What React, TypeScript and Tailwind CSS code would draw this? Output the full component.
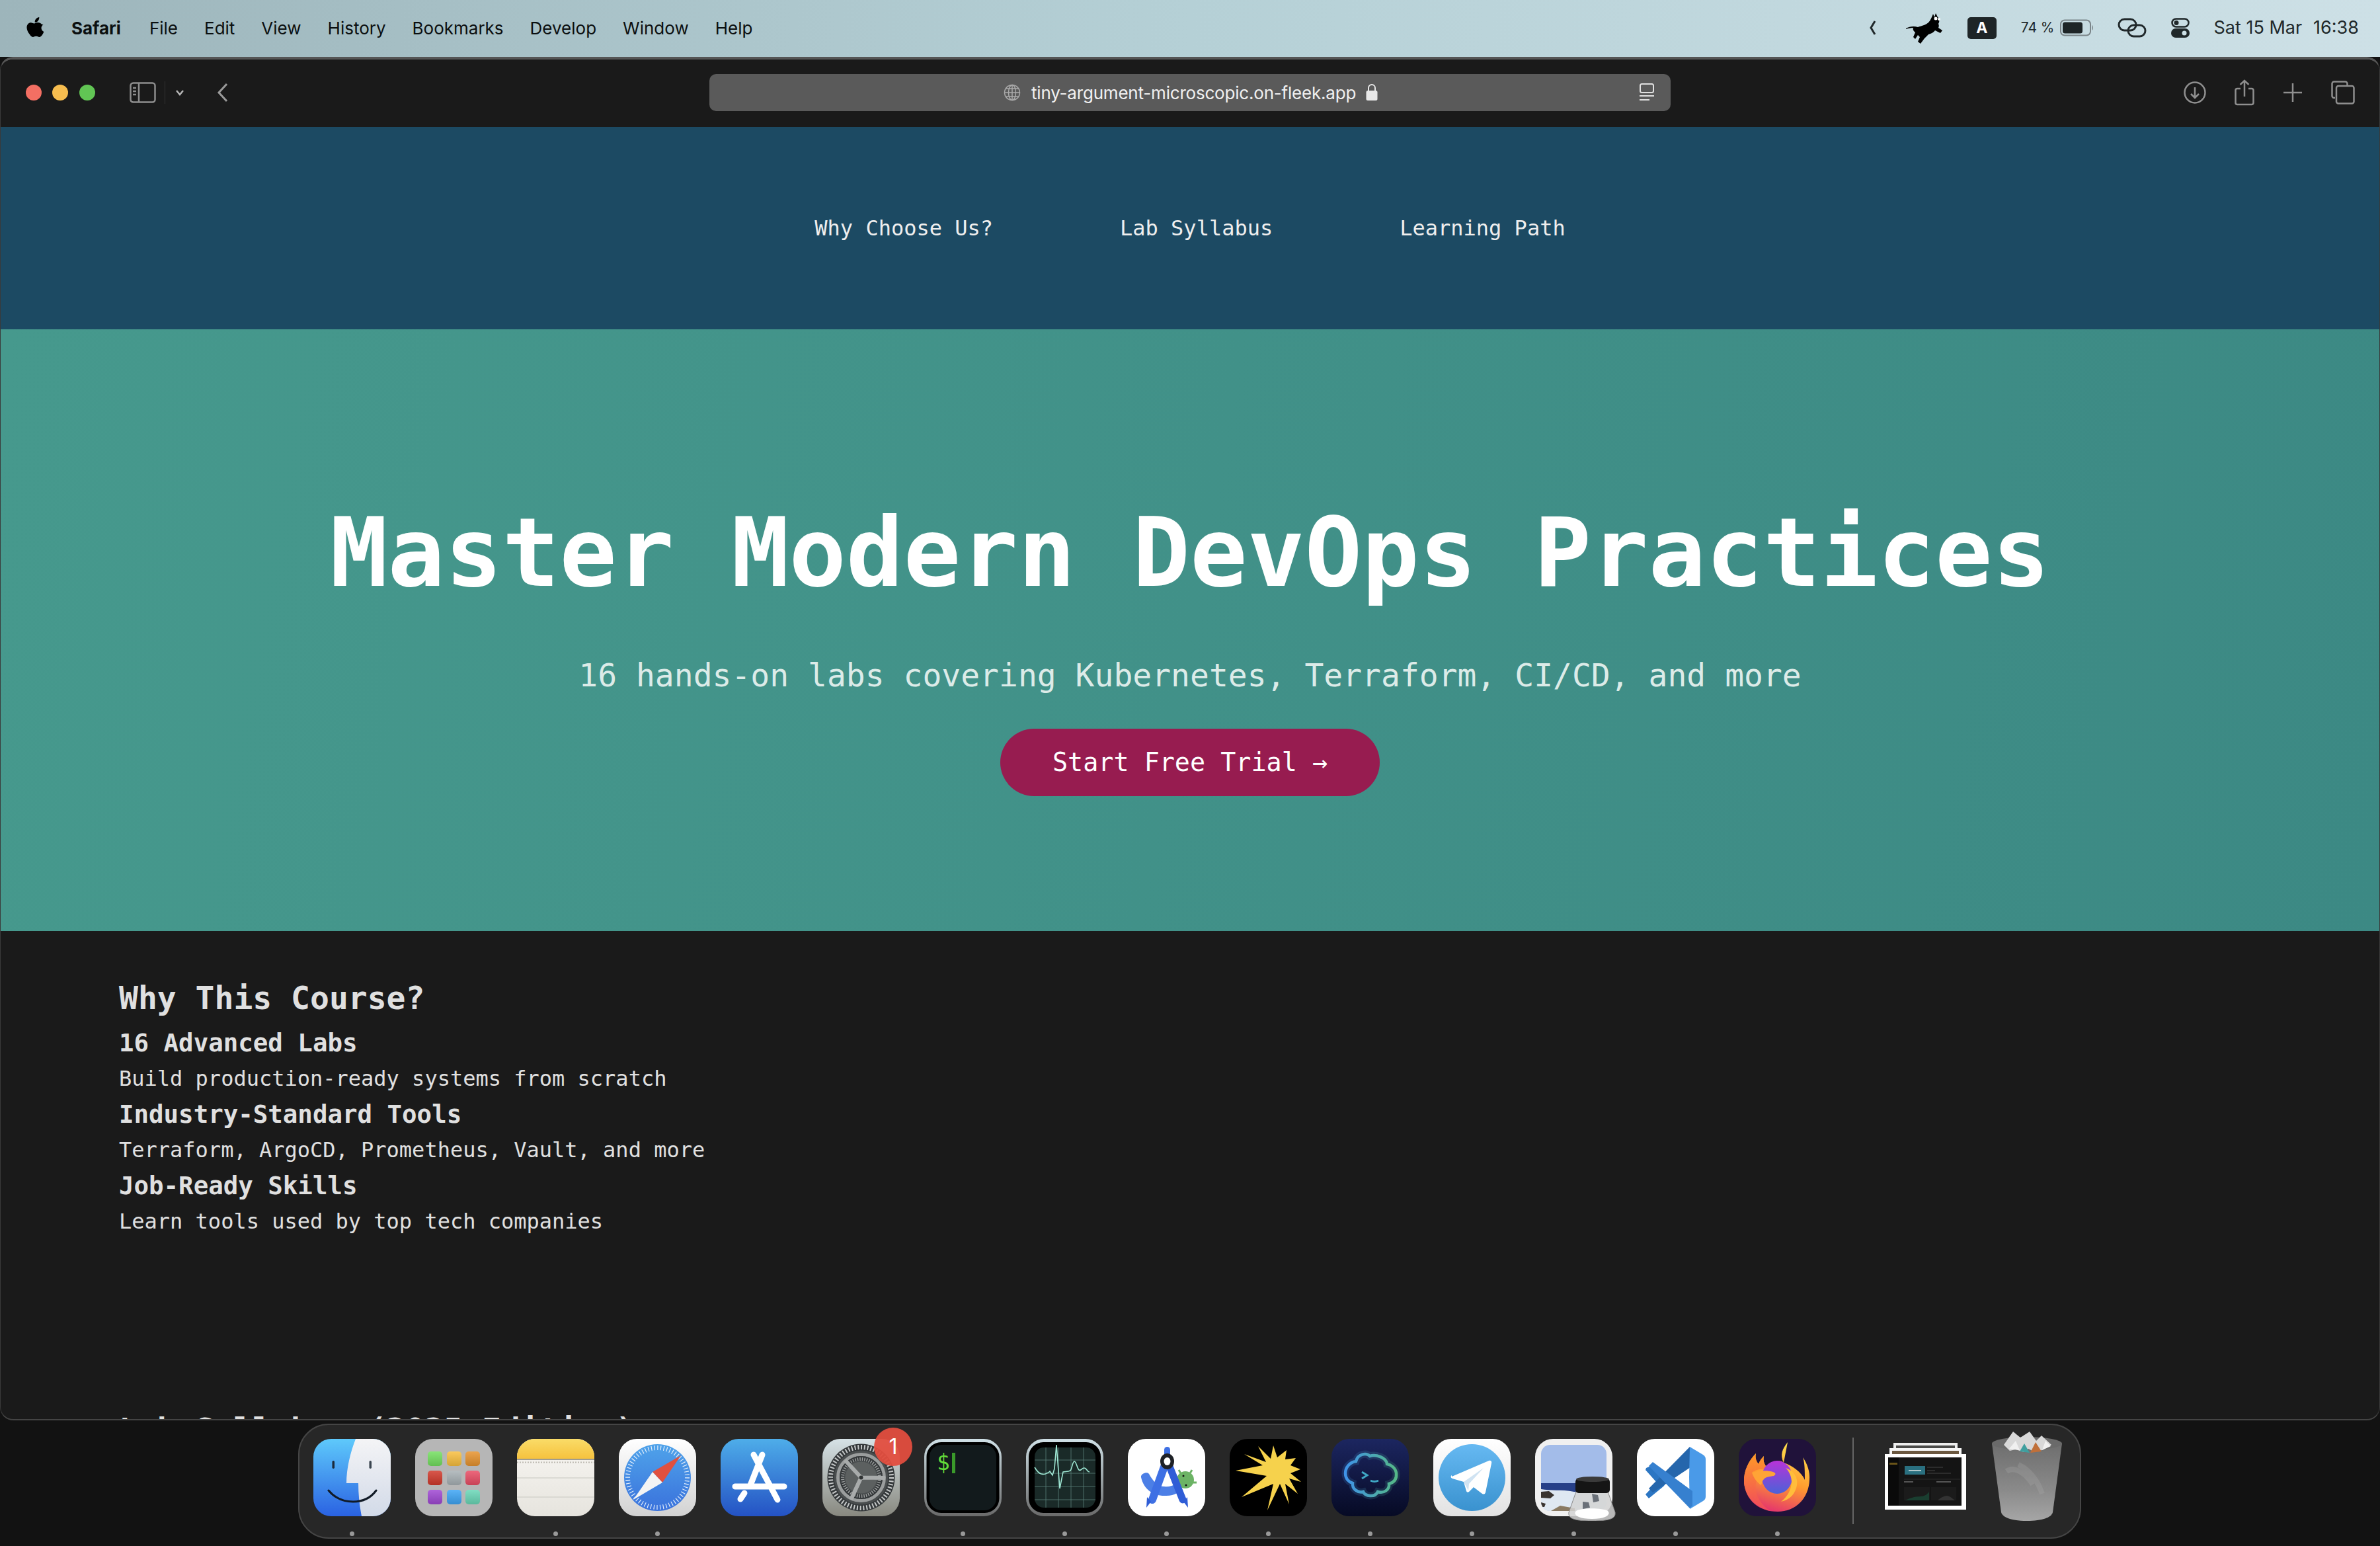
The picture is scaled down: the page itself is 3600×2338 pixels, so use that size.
const mono = "font-['DejaVu_Sans_Mono',monospace]";

const menus = ['File', 'Edit', 'View', 'History', 'Bookmarks', 'Develop', 'Window', 'Help'];

function MenuBar() {
  return (
    <div className="flex h-[86px] shrink-0 items-center justify-between bg-[linear-gradient(90deg,#9db5bb,#b5d0d6_50%,#cde0e6)] pb-[2px] pl-[40px] pr-[32px] font-['Inter',sans-serif] text-[26px] text-[#0b0f10]">
      <div className="flex items-center">
        <svg viewBox="0 0 26 32" className="mr-[41px] h-[32px] w-[27px] fill-black">
          <path d="M18.8 0c.2 2-.6 4-1.7 5.400-1.200 1.400-3 2.500-4.900 2.300-.2-1.900.7-3.900 1.800-5.200C15.200 1.100 17.200.1 18.800 0zM25 11.200c-1.800 1.100-3 3-3 5.100 0 2.500 1.500 4.700 3.800 5.600-.5 1.500-1.200 3-2.100 4.300-1.300 1.900-2.700 3.800-4.700 3.800-2 0-2.600-1.200-4.900-1.200-2.300 0-3 1.200-4.900 1.200-2 0-3.500-2-4.800-3.900C1.600 22.800 0 18.600 0 15.600c0-4.800 3.100-7.400 6.200-7.400 2 0 3.700 1.300 5 1.300 1.200 0 3.100-1.400 5.400-1.400 2.500 0 4.800.9 6.400 3z" />
        </svg>
        <span className="mr-[43px] font-bold">Safari</span>
        <div className="flex gap-[40px]">
          {menus.map((m) => (
            <span key={m}>{m}</span>
          ))}
        </div>
      </div>
      <div className="flex items-center text-[#20282a]">
        <svg viewBox="0 0 14 26" className="h-[26px] w-[14px] fill-none stroke-[#20282a] stroke-[3]">
          <path d="M10 3 4 13l6 10" />
        </svg>
        <svg viewBox="0 0 56 56" className="ml-[43px] h-[56px] w-[56px] fill-black">
          <path d="M0 29c5-3 12-4 18-2 5-2 12-3 16-7 3-3 5-8 7-13l2 5 2-6 3 6c3 2 3 7 1 10 1 2 1 4 0 6l6 4-3 4-8-4c-2 3-6 5-10 6l-6 6-6 8-4-3 3-7-3-3-4 6-3-3 3-7c-3-2-4-5-3-7-4 0-8 1-11 2z" />
          <circle cx="45" cy="14" r="2.500" fill="#fff" />
          <circle cx="50" cy="15" r="2" fill="#fff" />
        </svg>
        <div className="ml-[37px] flex h-[33px] w-[44px] items-center justify-center rounded-[5px] bg-[#1e2527] text-[23px] font-bold text-white">
          A
        </div>
        <span className="ml-[37px] text-[21px]">74 %</span>
        <svg viewBox="0 0 52 26" className="ml-[9px] h-[26px] w-[52px]">
          <rect x="1" y="1.500" width="45" height="23" rx="6" fill="none" stroke="#7b8589" strokeWidth="2" />
          <rect x="4" y="4.500" width="30" height="17" rx="3.500" fill="#1e2527" />
          <path d="M48.500 9c2 1 2 7 0 8z" fill="#7b8589" />
        </svg>
        <svg viewBox="0 0 44 30" className="ml-[35px] h-[30px] w-[44px] fill-none stroke-[#20282a] stroke-[3]">
          <rect x="2" y="2" width="26" height="17" rx="8.500" />
          <rect x="16" y="11" width="26" height="17" rx="8.500" />
        </svg>
        <svg viewBox="0 0 28 30" className="ml-[37px] h-[30px] w-[28px]">
          <rect x="1.500" y="1.500" width="25" height="12" rx="6" fill="none" stroke="#20282a" strokeWidth="2.500" />
          <circle cx="8" cy="7.500" r="3.500" fill="#20282a" />
          <rect x="0" y="16" width="28" height="14" rx="7" fill="#20282a" />
          <circle cx="20" cy="23" r="3.500" fill="#cde0e6" />
        </svg>
        <span className="ml-[36px] text-[27px]">Sat 15 Mar</span>
        <span className="ml-[17px] text-[27px]">16:38</span>
      </div>
    </div>
  );
}

function Toolbar() {
  return (
    <div className="flex h-[102px] shrink-0 items-center bg-[#1a1a1a] pb-[2px]">
      <div className="flex w-[1072px] items-center pl-[38px]">
        <span className="h-[24px] w-[24px] rounded-full bg-[#f36f63]" />
        <span className="ml-[16px] h-[24px] w-[24px] rounded-full bg-[#f6bd4f]" />
        <span className="ml-[17px] h-[24px] w-[24px] rounded-full bg-[#61c554]" />
        <svg viewBox="0 0 40 32" className="ml-[52px] h-[32px] w-[40px] fill-none stroke-[#8d8d8d] stroke-[2.500]">
          <rect x="1.500" y="1.500" width="37" height="29" rx="4" />
          <path d="M14 2v28M5 9h5M5 14h5M5 19h5" />
        </svg>
        <div className="ml-[13px] h-[34px] w-[1px] bg-[#333]" />
        <svg viewBox="0 0 14 10" className="ml-[15px] h-[10px] w-[14px] fill-none stroke-[#b5b5b5] stroke-[2.500]">
          <path d="M2 2l5 6 5-6" />
        </svg>
        <svg viewBox="0 0 18 30" className="ml-[49px] h-[30px] w-[18px] fill-none stroke-[#9a9a9a] stroke-[3]">
          <path d="M15 2 3 15l12 13" />
        </svg>
      </div>
      <div className="flex h-[56px] w-[1454px] items-center rounded-[10px] bg-[#5a5a5a] pl-[445px] pr-[24px] font-['Inter',sans-serif] text-[26px] text-[#f0f0f0]">
        <svg viewBox="0 0 26 26" className="h-[26px] w-[26px] fill-none stroke-[#aaa] stroke-[1.500]">
          <circle cx="13" cy="13" r="11.500" />
          <ellipse cx="13" cy="13" rx="5.500" ry="11.500" />
          <path d="M13 1.500v23M1.500 13h23M3.500 7h19M3.500 19h19" />
        </svg>
        <span className="ml-[16px] tracking-[-0.2px]">tiny-argument-microscopic.on-fleek.app</span>
        <svg viewBox="0 0 20 28" className="ml-[14px] h-[28px] w-[20px]">
          <path d="M5 12V7a5 5 0 0 1 10 0v5" fill="none" stroke="#e8e8e8" strokeWidth="2" />
          <rect x="1.500" y="11" width="17" height="15" rx="2.500" fill="#e8e8e8" />
        </svg>
        <svg viewBox="0 0 24 28" className="ml-auto h-[28px] w-[24px] fill-none stroke-[#e0e0e0] stroke-[2]">
          <rect x="2" y="1" width="20" height="13" rx="2.500" />
          <path d="M1 19h22M1 25h15" />
        </svg>
      </div>
      <div className="flex flex-1 items-center pl-[776px]">
        <svg viewBox="0 0 34 34" className="h-[34px] w-[34px] fill-none stroke-[#8f8f8f] stroke-[2.500]">
          <circle cx="17" cy="17" r="15.500" />
          <path d="M17 9v16M11 19l6 6 6-6" />
        </svg>
        <svg viewBox="0 0 30 40" className="ml-[43px] h-[40px] w-[30px] fill-none stroke-[#8f8f8f] stroke-[2.500]">
          <path d="M9 14H4a2.500 2.500 0 0 0-2.500 2.500v19A2.500 2.500 0 0 0 4 38h22a2.500 2.500 0 0 0 2.500-2.500v-19A2.500 2.500 0 0 0 26 14h-5M15 26V2M8.500 8 15 2l6.500 6" />
        </svg>
        <svg viewBox="0 0 28 28" className="ml-[44px] h-[28px] w-[28px] fill-none stroke-[#8f8f8f] stroke-[2.500]">
          <path d="M14 0v28M0 14h28" />
        </svg>
        <svg viewBox="0 0 36 36" className="ml-[44px] h-[36px] w-[36px] fill-none stroke-[#8f8f8f] stroke-[2.500]">
          <path d="M6 26H4.500a3 3 0 0 1-3-3V4.500a3 3 0 0 1 3-3h17a3 3 0 0 1 3 3V7" />
          <rect x="8" y="8" width="26.500" height="26.500" rx="3" />
        </svg>
      </div>
    </div>
  );
}

function Page() {
  return (
    <div className={`${mono} flex-1 overflow-hidden`}>
      <nav className="flex h-[306px] items-center justify-center gap-[192px] bg-[#1c4a63] text-[32px] text-[#eeeeee]">
        <span>Why Choose Us?</span>
        <span>Lab Syllabus</span>
        <span>Learning Path</span>
      </nav>
      <header className="flex h-[910px] flex-col items-center bg-[linear-gradient(100deg,#46998d,#3c8984)] pt-[223px] text-white">
        <h1 className="text-[144px] font-bold leading-[230px]">Master Modern DevOps Practices</h1>
        <p className="mt-[32px] text-[48px] leading-[77px] text-[#dcebe8]">
          16 hands-on labs covering Kubernetes, Terraform, CI/CD, and more
        </p>
        <button className="mt-[42px] flex h-[102px] w-[574px] items-center justify-center rounded-full bg-[#971c50] text-[38.400px] text-white">
          Start Free Trial →
        </button>
      </header>
      <section className="px-[179px] pt-[62px] text-[#e0e0e0]">
        <h2 className="text-[48px] font-bold leading-[78px]">Why This Course?</h2>
        <h3 className="text-[37.440px] font-bold leading-[58px]">16 Advanced Labs</h3>
        <p className="text-[32px] leading-[50px]">Build production-ready systems from scratch</p>
        <h3 className="text-[37.440px] font-bold leading-[58px]">Industry-Standard Tools</h3>
        <p className="text-[32px] leading-[50px]">Terraform, ArgoCD, Prometheus, Vault, and more</p>
        <h3 className="text-[37.440px] font-bold leading-[58px]">Job-Ready Skills</h3>
        <p className="text-[32px] leading-[50px]">Learn tools used by top tech companies</p>
        <h2 className="mt-[252px] text-[48px] font-bold leading-[76px]">Lab Syllabus (2025 Edition)</h2>
      </section>
    </div>
  );
}

function Squircle({ id, children, fill }: { id: string; children?: React.ReactNode; fill: string }) {
  return (
    <svg viewBox="0 0 117 117" className="h-[117px] w-[117px] overflow-visible">
      <defs>
        <clipPath id={id}>
          <rect width="117" height="117" rx="27" />
        </clipPath>
      </defs>
      <g clipPath={`url(#${id})`}>
        <rect width="117" height="117" fill={fill} />
        {children}
      </g>
    </svg>
  );
}

function Finder() {
  return (
    <Squircle id="finder" fill="url(#finderBlue)">
      <defs>
        <linearGradient id="finderBlue" x1="0" y1="0" x2="0" y2="1">
          <stop offset="0" stopColor="#5ec9fb" />
          <stop offset="1" stopColor="#2a62e2" />
        </linearGradient>
        <linearGradient id="finderWhite" x1="0" y1="0" x2="0" y2="1">
          <stop offset="0" stopColor="#f4f4f6" />
          <stop offset="1" stopColor="#d2dae8" />
        </linearGradient>
      </defs>
      <path d="M64 0C56 20 50 45 50 67h18c0 18 2 35 5 50h44V0z" fill="url(#finderWhite)" />
      <rect x="28.500" y="33" width="3.500" height="12" rx="1.700" fill="#1c2a3a" />
      <rect x="84.500" y="33" width="3.500" height="12" rx="1.700" fill="#3a4550" />
      <path d="M23 78c10 12 22 17 37 17s27-6 35-17" fill="none" stroke="#111a26" strokeWidth="3" strokeLinecap="round" />
    </Squircle>
  );
}

function Launchpad() {
  const tiles = [
    ['#74e060', 19, 19],
    ['#fac040', 48, 19],
    ['#e8942f', 76, 19],
    ['#d23a2c', 19, 48],
    ['#a9b2b6', 48, 48],
    ['#ea4d65', 76, 48],
    ['#a048d4', 19, 77],
    ['#3ea6f6', 48, 77],
    ['#6ad8b8', 76, 77],
  ] as const;
  return (
    <Squircle id="launch" fill="#b6b6b6">
      <defs>
        <linearGradient id="tileShade" x1="0" y1="0" x2="0" y2="1">
          <stop offset="0" stopColor="#fff" stopOpacity="0.150" />
          <stop offset="1" stopColor="#000" stopOpacity="0.150" />
        </linearGradient>
      </defs>
      {tiles.map(([c, x, y]) => (
        <g key={c}>
          <rect x={x} y={y} width="22" height="22" rx="5" fill={c} />
          <rect x={x} y={y} width="22" height="22" rx="5" fill="url(#tileShade)" />
        </g>
      ))}
    </Squircle>
  );
}

function Notes() {
  return (
    <Squircle id="notes" fill="url(#notesPaper)">
      <defs>
        <linearGradient id="notesPaper" x1="0" y1="0" x2="0" y2="1">
          <stop offset="0" stopColor="#f8f6f2" />
          <stop offset="1" stopColor="#e6e4de" />
        </linearGradient>
        <linearGradient id="notesTop" x1="0" y1="0" x2="0" y2="1">
          <stop offset="0" stopColor="#fadc68" />
          <stop offset="1" stopColor="#f6c23e" />
        </linearGradient>
      </defs>
      <rect width="117" height="30" fill="url(#notesTop)" />
      <rect y="30" width="117" height="2" fill="#a09c90" />
      <path d="M0 35.500h117" stroke="#bdbab2" strokeWidth="2" strokeDasharray="2 2" />
      <path d="M0 59h117M0 88h117" stroke="#d5d3cd" strokeWidth="1.500" />
    </Squircle>
  );
}

function Safari() {
  return (
    <Squircle id="safari" fill="url(#safariBg)">
      <defs>
        <linearGradient id="safariBg" x1="0" y1="0" x2="0" y2="1">
          <stop offset="0" stopColor="#ffffff" />
          <stop offset="1" stopColor="#d2d2d2" />
        </linearGradient>
        <linearGradient id="safariBlue" x1="0" y1="0" x2="0" y2="1">
          <stop offset="0" stopColor="#4fa3ea" />
          <stop offset="1" stopColor="#3a72dc" />
        </linearGradient>
      </defs>
      <circle cx="58.500" cy="58.500" r="50.500" fill="url(#safariBlue)" />
      <circle cx="58.500" cy="58.500" r="45" fill="none" stroke="#e4effb" strokeWidth="7" strokeDasharray="1.200 3.500" />
      <path d="M94 25 51 50l15 16z" fill="#e0503f" />
      <path d="M22 92l29-42 15 16z" fill="#f4f4f4" />
    </Squircle>
  );
}

function AppStore() {
  return (
    <Squircle id="appstore" fill="url(#asBlue)">
      <defs>
        <linearGradient id="asBlue" x1="0" y1="0" x2="0" y2="1">
          <stop offset="0" stopColor="#4eade9" />
          <stop offset="1" stopColor="#2452c4" />
        </linearGradient>
      </defs>
      <g fill="none" stroke="#fff" strokeWidth="9" strokeLinecap="round">
        <path d="M63 24 45 70M50 24l36 68M22 72h74M36 82l-6 9" />
      </g>
    </Squircle>
  );
}

function Settings() {
  return (
    <Squircle id="settings" fill="url(#setBg)">
      <defs>
        <linearGradient id="setBg" x1="0" y1="0" x2="0" y2="1">
          <stop offset="0" stopColor="#d6e2e6" />
          <stop offset="1" stopColor="#88887f" />
        </linearGradient>
      </defs>
      <circle cx="58.500" cy="58.500" r="51" fill="#34383a" />
      <circle cx="58.500" cy="58.500" r="46" fill="none" stroke="#c4c7c7" strokeWidth="7" strokeDasharray="2 2.800" />
      <circle cx="58.500" cy="58.500" r="41" fill="#4a4e4f" />
      <circle cx="58.500" cy="58.500" r="35" fill="none" stroke="#9a9d9d" strokeWidth="5" />
      <circle cx="58.500" cy="58.500" r="29" fill="none" stroke="#34383a" strokeWidth="7" />
      <circle cx="58.500" cy="58.500" r="28" fill="none" stroke="#9a9d9d" strokeWidth="5" strokeDasharray="1.500 2" />
      <circle cx="58.500" cy="58.500" r="24" fill="#5c6060" />
      <path d="M58.500 58.500 34 32M58.500 58.500 95 59M58.500 58.500 43 92" stroke="#a8abab" strokeWidth="6" />
      <circle cx="58.500" cy="58.500" r="3" fill="#2f3233" />
    </Squircle>
  );
}

function Terminal() {
  return (
    <Squircle id="terminal" fill="url(#termFrame)">
      <defs>
        <linearGradient id="termFrame" x1="0" y1="0" x2="0" y2="1">
          <stop offset="0" stopColor="#cfe0e6" />
          <stop offset="1" stopColor="#6a6a6a" />
        </linearGradient>
      </defs>
      <rect x="3.500" y="5" width="110" height="107" rx="22" fill="#000" />
      <rect x="8" y="9" width="101" height="99" rx="18" fill="#121a1c" />
      <text x="19" y="47" className="font-['DejaVu_Sans_Mono',monospace] text-[33px]" fill="#62dc3a">
        $
      </text>
      <rect x="42" y="21" width="5" height="31" fill="#3a9a2a" />
    </Squircle>
  );
}

function Activity() {
  return (
    <Squircle id="activity" fill="url(#actFrame)">
      <defs>
        <linearGradient id="actFrame" x1="0" y1="0" x2="0" y2="1">
          <stop offset="0" stopColor="#cfe0e6" />
          <stop offset="1" stopColor="#6a6a6a" />
        </linearGradient>
      </defs>
      <rect x="4" y="5" width="109" height="107" rx="22" fill="#000" />
      <rect x="13" y="13" width="92" height="91" rx="14" fill="#1a2a28" />
      <path
        d="M13 32h92M13 52h92M13 72h92M13 92h92M30 13v91M49 13v91M68 13v91M87 13v91"
        stroke="#5a8078"
        strokeWidth="0.800"
      />
      <path
        d="M13 43c3 5 6 9 10 10 4 1 7 0 8-1l3-1 2-2 4 6 3-10 3-36 5 66 5-25c3-1 7 0 11-2 3-4 3-13 6-14 3 0 4 10 7 13 3 2 4-3 8-3s4 6 8 6"
        fill="none"
        stroke="#9fe8d4"
        strokeWidth="1.600"
      />
    </Squircle>
  );
}

function Studio() {
  return (
    <Squircle id="studio" fill="#ffffff">
      <circle cx="87" cy="62" r="13" fill="#6cb365" />
      <path d="M80 52l-3-5M94 52l3-5M99 66h5" stroke="#6cb365" strokeWidth="3" />
      <circle cx="84" cy="56" r="1.500" fill="#111" />
      <circle cx="88" cy="70" r="1.500" fill="#111" />
      <path d="M20 58c4 18 18 29 38 28 10 0 16-3 21-7l-2-13c-8 5-15 7-22 6-10 0-17-8-23-19-3-4-13 0-12 5z" fill="#4c7fe6" />
      <path d="M58 34 37 92" stroke="#3e70e4" strokeWidth="12" strokeLinecap="round" />
      <path d="M60 34 83 92" stroke="#2f5dd6" strokeWidth="11" strokeLinecap="round" />
      <path d="M29 88l-1 16 7-9zM90 88l1 16-7-9z" fill="#2f5dd6" />
      <rect x="55" y="12" width="9" height="20" rx="4.500" fill="#3e70e4" />
      <ellipse cx="59.500" cy="34" rx="10.500" ry="12" fill="#1e2127" />
      <ellipse cx="59.500" cy="34" rx="5" ry="6" fill="#fff" />
    </Squircle>
  );
}

function Spark() {
  return (
    <Squircle id="spark" fill="#000000">
      <polygon
        points="9,48 50,40 22,23 55,35 43,11 62,30 66,10 72,28 86,17 84,31 100,29 92,40 107,46 92,52 108,65 90,60 103,83 84,68 90,99 76,68 57,108 66,68 18,88 56,56"
        fill="#f6d24c"
      />
    </Squircle>
  );
}

function CloudTerm() {
  const d =
    'M58 26c-5-5-18-4-21 8-9 1-16 9-16 18 0 8 5 13 11 15-1 9 8 15 16 13 3 7 18 9 22 0 9 3 18-3 17-12 7-2 12-7 11-16-1-8-8-13-14-14-1-10-17-15-26-12z';
  return (
    <Squircle id="cloud" fill="url(#cloudBg)">
      <defs>
        <linearGradient id="cloudBg" x1="0" y1="0" x2="0" y2="1">
          <stop offset="0" stopColor="#1c2660" />
          <stop offset="1" stopColor="#060a24" />
        </linearGradient>
        <linearGradient id="cloudStroke" x1="0" y1="0" x2="1" y2="0">
          <stop offset="0" stopColor="#3f93e8" />
          <stop offset="1" stopColor="#55b888" />
        </linearGradient>
      </defs>
      <path d={d} fill="none" stroke="url(#cloudStroke)" strokeWidth="11" opacity="0.180" />
      <path d={d} fill="none" stroke="url(#cloudStroke)" strokeWidth="4.500" />
      <path d="M46 50l8 5-8 5M59 63c4 2 8 2 12 0" fill="none" stroke="#3fa7c4" strokeWidth="3" />
    </Squircle>
  );
}

function Telegram() {
  return (
    <Squircle id="telegram" fill="url(#tgBg)">
      <defs>
        <linearGradient id="tgBg" x1="0" y1="0" x2="0" y2="1">
          <stop offset="0" stopColor="#ffffff" />
          <stop offset="1" stopColor="#e2e2e2" />
        </linearGradient>
        <linearGradient id="tgBlue" x1="0" y1="0" x2="0" y2="1">
          <stop offset="0" stopColor="#66b9f2" />
          <stop offset="1" stopColor="#3a92cf" />
        </linearGradient>
      </defs>
      <circle cx="58.500" cy="58.500" r="50.500" fill="url(#tgBlue)" />
      <path d="M28 57 84 33c3-1 5 1 4 4l-9 44c-1 3-3 3-5 2L61 73l-7 7c-2 1-3 1-4-1l-4-14-17-5c-3-1-3-4-1-5z" fill="#fff" />
      <path d="M46 65 76 44 54 68l-1 10z" fill="#d0e3f2" />
    </Squircle>
  );
}

function Preview() {
  return (
    <Squircle id="preview" fill="#f0f0f0">
      <defs>
        <clipPath id="previewPic">
          <rect x="9" y="9" width="99" height="100" rx="14" />
        </clipPath>
      </defs>
      <g clipPath="url(#previewPic)">
        <rect x="9" y="9" width="99" height="100" fill="#a3bce9" />
        <rect x="9" y="67" width="99" height="16" fill="#263f88" />
        <path d="M9 76c14 3 30 0 50 4l49 2v27H9z" fill="#dfe8f2" />
        <path d="M9 80l12-1 8 6-6 5-14-1zM9 96l7 2-2 5H9z" fill="#3a3430" />
        <path d="M24 109l14-8 22 4v4z" fill="#8a7a62" />
      </g>
    </Squircle>
  );
}

function PreviewLoupe() {
  return (
    <svg viewBox="0 0 72 67" className="absolute left-[50px] top-[57px] h-[67px] w-[72px]">
      <path d="M13 20h46l12 34c1 8-4 13-35 13S0 62 1 54z" fill="#d4d4d4" fillOpacity="0.850" stroke="#8a8a8a" />
      <path d="M12 52c8-5 40-5 48 0 5 5-2 12-24 12S7 57 12 52z" fill="#ffffff" />
      <path d="M36 26l9 2 2 9-9 2zM22 38l9 1 2 8-11 2z" fill="#6a7078" />
      <rect x="11" y="3" width="52" height="22" rx="5" fill="#151515" />
      <ellipse cx="37" cy="4" rx="25" ry="4" fill="#3a3a3a" />
    </svg>
  );
}

function VSCode() {
  return (
    <Squircle id="vscode" fill="#ffffff">
      <path d="M14 44l-1 3 17 19-17 18 5 6 22-18 7-8-26-23z" fill="#2c76c3" />
      <path d="M80 12 18 75l6 6 60-40z" fill="#2566ac" />
      <path d="M80 12l20 12c3 2 4 4 4 7v56c0 3-1 5-4 7l-20 12-1-48z" fill="#4a9ae8" />
      <path d="M18 41l62 64 4-4V79L24 35z" fill="#3680cf" />
    </Squircle>
  );
}

function Firefox() {
  return (
    <Squircle id="firefox" fill="#20123a">
      <defs>
        <linearGradient id="ffOuter" x1="0.700" y1="0" x2="0.400" y2="1">
          <stop offset="0" stopColor="#ffe24f" />
          <stop offset="0.550" stopColor="#ff9b2e" />
          <stop offset="1" stopColor="#e4336e" />
        </linearGradient>
        <linearGradient id="ffLeft" x1="0" y1="0" x2="0" y2="1">
          <stop offset="0" stopColor="#ff9a26" />
          <stop offset="1" stopColor="#f0485e" />
        </linearGradient>
        <linearGradient id="ffInner" x1="0" y1="0" x2="0" y2="1">
          <stop offset="0" stopColor="#b833d8" />
          <stop offset="1" stopColor="#4b62d8" />
        </linearGradient>
      </defs>
      <path
        d="M74 5C66 15 62 24 68 36 80 40 95 50 100 62 100 50 100 36 97 28 104 38 108 50 107 62 106 90 86 110 59 110 30 110 10 92 8 66 7 48 16 32 26 22 24 30 28 36 30 38 32 32 36 28 38 26 36 34 40 42 46 46 50 36 60 30 68 36z"
        fill="url(#ffOuter)"
      />
      <path d="M26 22C16 32 7 48 8 66c2 22 18 38 40 43-16-10-24-26-22-42 1-6 3-10 6-12l-12-4c6-5 14-6 20-4l6-1c-6-4-10-12-8-20-2 2-6 6-8 12-2-2-6-8-4-16z" fill="url(#ffLeft)" />
      <ellipse cx="58" cy="58" rx="23" ry="25" fill="url(#ffInner)" />
      <path d="M20 51c8-3 24-4 32-1 5 2 4 4 1 6-6 1-12 1-15 5-3 3-3 6-4 9-6-4-11-10-14-19z" fill="#ffa436" />
      <path d="M71 44c12 4 19 14 17 26-2 12-10 22-24 25 8-6 15-16 16-29 0-8-3-16-9-22z" fill="#ffbd3b" />
    </Squircle>
  );
}

function Stack() {
  return (
    <svg viewBox="0 0 123 101" className="absolute left-0 top-[6px] h-[101px] w-[123px]">
      <rect x="13" y="0" width="97" height="20" fill="#eee" />
      <rect x="17" y="4" width="89" height="12" fill="#4a4a48" />
      <rect x="7" y="8" width="109" height="20" fill="#f6f6f6" />
      <rect x="11" y="12" width="101" height="12" fill="#6b5840" />
      <rect x="0" y="17" width="123" height="84" fill="#ffffff" />
      <rect x="5" y="22" width="111" height="73" fill="#141414" />
      <rect x="5" y="22" width="16" height="73" fill="#0a0a0a" />
      <rect x="7" y="30" width="12" height="3" fill="#6a5418" />
      <rect x="30" y="35" width="31" height="13" fill="#2a7080" />
      <rect x="36" y="41" width="19" height="1.500" fill="#c8d8d8" />
      <path d="M64 37h24M64 42h12M64 46h36" stroke="#444" strokeWidth="1" />
      <path d="M29 55h85" stroke="#2a2a2a" />
      <rect x="29" y="58" width="14" height="2" fill="#555" />
      <rect x="78" y="58" width="22" height="2" fill="#555" />
      <rect x="29" y="67" width="39" height="20" fill="#1b1b1b" />
      <rect x="70" y="67" width="38" height="20" fill="#1b1b1b" />
      <path d="M30 87c8-3 14-6 24-6 6 0 10-3 13-7v13z" fill="#1a3e30" />
      <path d="M80 87c4-4 10-7 14-7s8 4 12 7z" fill="#333" />
    </svg>
  );
}

function Trash() {
  return (
    <svg viewBox="0 0 107 135" className="absolute left-0 top-[-11px] h-[135px] w-[107px]">
      <defs>
        <linearGradient id="can" x1="0" y1="0" x2="0" y2="1">
          <stop offset="0" stopColor="#6e6e6e" />
          <stop offset="0.600" stopColor="#8a8a8a" />
          <stop offset="1" stopColor="#a6a6a6" />
        </linearGradient>
      </defs>
      <path d="M0 18 14 122c2 8 16 13 39 13s37-5 39-13L106 18z" fill="url(#can)" />
      <ellipse cx="53" cy="18" rx="53" ry="10" fill="#6a6a6a" />
      <path d="M18 20 32 0l11 9 14-9 10 14 8-8 15 14-14 8-13 2-8-4-7 5-12-4-9 2z" fill="#d8d8d8" />
      <path d="M42 30l7-12 8 14z" fill="#3f9f9f" />
      <path d="M58 32l8-16 9 14z" fill="#c0703a" />
      <path d="M26 26l10-12 6 14zM76 28l5-14 8 8z" fill="#f0f0f0" />
      <path d="M22 60c12-8 28 2 40 20M40 50c18 8 30 26 36 44" stroke="#b0b0b0" strokeWidth="8" fill="none" opacity="0.250" />
    </svg>
  );
}

const apps: { key: string; el: React.ReactNode; running: boolean }[] = [
  { key: 'finder', el: <Finder />, running: true },
  { key: 'launchpad', el: <Launchpad />, running: false },
  { key: 'notes', el: <Notes />, running: true },
  { key: 'safari', el: <Safari />, running: true },
  { key: 'appstore', el: <AppStore />, running: false },
  {
    key: 'settings',
    el: (
      <>
        <Settings />
        <span className="absolute left-[78px] top-[-17px] flex h-[58px] w-[58px] items-center justify-center rounded-full bg-[#e24d3e]/95 font-['Inter',sans-serif] text-[32px] text-white">
          1
        </span>
      </>
    ),
    running: false,
  },
  { key: 'terminal', el: <Terminal />, running: true },
  { key: 'activity', el: <Activity />, running: true },
  { key: 'studio', el: <Studio />, running: true },
  { key: 'spark', el: <Spark />, running: true },
  { key: 'cloud', el: <CloudTerm />, running: true },
  { key: 'telegram', el: <Telegram />, running: true },
  {
    key: 'preview',
    el: (
      <>
        <Preview />
        <PreviewLoupe />
      </>
    ),
    running: true,
  },
  { key: 'vscode', el: <VSCode />, running: true },
  { key: 'firefox', el: <Firefox />, running: true },
];

function Dock() {
  return (
    <div className="absolute left-[451px] top-[2153px] flex h-[174px] w-[2697px] rounded-[46px] border-2 border-[#454545] bg-[#272727] pl-[21px] pt-[21px]">
      <div className="flex gap-[37px]">
        {apps.map((a) => (
          <div key={a.key} className="flex w-[117px] flex-col items-center">
            <div className="relative h-[117px] w-[117px]">{a.el}</div>
            {a.running && <span className="mt-[23px] h-[7px] w-[7px] rounded-full bg-[#999]" />}
          </div>
        ))}
      </div>
      <div className="ml-[55px] h-[131px] w-[2px] -translate-y-[2px] bg-[#666]" />
      <div className="relative ml-[47px] h-[117px] w-[123px]">
        <Stack />
      </div>
      <div className="relative ml-[39px] h-[117px] w-[107px]">
        <Trash />
      </div>
    </div>
  );
}

export default function App() {
  return (
    <div className="relative flex h-[2338px] w-[3600px] flex-col overflow-hidden bg-[#121212]">
      <MenuBar />
      <div className="flex h-[2062px] shrink-0 flex-col overflow-hidden rounded-[20px] border-x border-t-4 border-b-2 border-x-[#3a3a3a] border-t-[#555] border-b-[#444] bg-[#1a1a1a]">
        <Toolbar />
        <Page />
      </div>
      <Dock />
    </div>
  );
}
